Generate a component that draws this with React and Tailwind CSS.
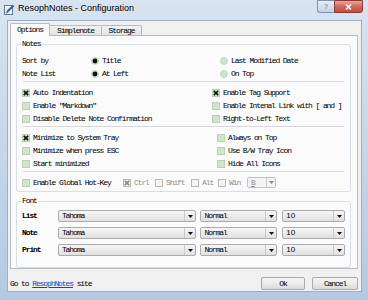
import React from 'react'

const mono = "font-['Liberation_Mono',monospace] text-[8px] tracking-[-1.1px] text-black leading-none whitespace-nowrap"

function Check({ checked, disabled }) {
    const box = disabled
        ? 'bg-[#f4f4f4] border-[#b8b8b8]'
        : 'bg-[#cfe5cc] border-[#b7d3b4]'
    return (
        <span className={`relative inline-flex w-[8px] h-[8px] shrink-0 border ${box}`}>
            {checked && (
                <svg width="6" height="6" viewBox="0 0 6 6" className="absolute left-0 top-0">
                    <path d="M0.8 0.8L5.2 5.2M5.2 0.8L0.8 5.2" stroke={disabled ? '#8a8a8a' : '#111'} strokeWidth="1.7" />
                </svg>
            )}
        </span>
    )
}

function Radio({ on }) {
    return (
        <svg width="8" height="8" viewBox="0 0 8 8" className="shrink-0">
            <circle cx="4" cy="4" r="3.6" fill="#cde3ca" stroke="#b5d1b2" strokeWidth="0.6" />
            {on && <circle cx="4" cy="4" r="2.4" fill="#111" />}
        </svg>
    )
}

function CheckItem({ label, checked, disabled }) {
    return (
        <div className="flex items-center gap-[3px]">
            <Check checked={checked} disabled={disabled} />
            <span className={`${mono} ${disabled ? '!text-[#8d8d8d]' : ''}`}>{label}</span>
        </div>
    )
}

function RadioItem({ label, on }) {
    return (
        <div className="flex items-center gap-[3px]">
            <Radio on={on} />
            <span className={mono}>{label}</span>
        </div>
    )
}

function Arrow({ color = '#111' }) {
    return (
        <svg width="5" height="3" viewBox="0 0 5 3">
            <path d="M0 0H5L2.5 3Z" fill={color} />
        </svg>
    )
}

function Combo({ text, w, sans }) {
    return (
        <div className={`${w} h-[12px] flex border border-[#acacac] rounded-[2px] bg-gradient-to-b from-[#f6f6f6] to-[#e0e0e0]`}>
            <div className={`flex-1 flex items-center pl-[3px] ${sans ? "font-['Liberation_Sans',sans-serif] text-[8px] leading-none text-black" : mono}`}>{text}</div>
            <div className="w-[11px] flex items-center justify-center border-l border-[#c9c9c9]">
                <Arrow />
            </div>
        </div>
    )
}

function Separator() {
    return <div className="mx-[3px] mt-[1px] mb-[3px] h-[2px] border-t border-[#d5d9dd] border-b border-b-white" />
}

function GroupBox({ label, className, children }) {
    return (
        <div className={`relative ml-[5px] w-[335px] border border-[#d5dfe5] rounded-[3px] box-border ${className}`}>
            <span className={`absolute left-[4px] top-[-5px] px-[1px] bg-[#fbfbfb] ${mono}`}>{label}</span>
            {children}
        </div>
    )
}

function Btn({ children, w }) {
    return (
        <div className={`${w} h-[13px] flex items-center justify-center border border-[#ababab] rounded-[2px] bg-gradient-to-b from-[#f4f4f4] via-[#ebebeb] to-[#dadada]`}>
            <span className={mono}>{children}</span>
        </div>
    )
}

export default function App() {
    return (
        <div className="w-[368px] h-[300px] flex flex-col bg-gradient-to-b from-[#d8e4f0] via-[#c4d7ea] to-[#b3cae2] overflow-hidden">
            {/* title bar */}
            <div className="h-[20px] flex items-start shrink-0">
                <svg width="11" height="11" viewBox="0 0 11 11" className="ml-[4px] mt-[4px]">
                    <rect x="0.5" y="1.5" width="8" height="9" fill="#eef3f9" stroke="#5c7fa6" />
                    <path d="M2 9L9.5 1.5" stroke="#2f5f9a" strokeWidth="2" />
                    <path d="M2 9L3 7.2" stroke="#e0b040" strokeWidth="1.2" />
                </svg>
                <span className="ml-[3px] mt-[3px] font-['Liberation_Sans',sans-serif] text-[9px] leading-[11px] text-black whitespace-nowrap">ResophNotes - Configuration</span>
                <div className="ml-auto mr-[5px] flex">
                    <div className="w-[17px] h-[13px] flex items-center justify-center border border-[#7d93ab] border-r-0 rounded-bl-[3px] bg-gradient-to-b from-[#e6eef6] to-[#c3d3e3] text-[7px] leading-none text-[#5a6e84] font-['Liberation_Sans',sans-serif]">?</div>
                    <div className="w-[29px] h-[13px] flex items-center justify-center border border-[#8b3b33] rounded-br-[3px] bg-gradient-to-b from-[#e9a69a] via-[#d2695a] to-[#c44c3a]">
                        <svg width="7" height="6" viewBox="0 0 7 6">
                            <path d="M1 0.5L6 5.5M6 0.5L1 5.5" stroke="#fff" strokeWidth="1.6" />
                        </svg>
                    </div>
                </div>
            </div>

            {/* client */}
            <div className="ml-[7px] w-[355px] h-[272px] shrink-0 flex flex-col border border-[#9db1c6] bg-[#f0f0f0] pt-[2px] pl-[2px] pb-[1px]">
                {/* tabs */}
                <div className="h-[12px] flex items-end relative z-10">
                    <div className="w-[40px] h-[13px] -mb-px flex items-center justify-center bg-[#fbfbfb] border border-b-0 border-[#b6bbc0] rounded-t-[2px]">
                        <span className={mono}>Options</span>
                    </div>
                    <div className="w-[52px] h-[10px] flex items-center justify-center bg-gradient-to-b from-[#f3f3f3] to-[#e3e3e3] border border-b-0 border-l-0 border-[#b6bbc0] rounded-tr-[2px]">
                        <span className={mono}>Simplenote</span>
                    </div>
                    <div className="w-[40px] h-[10px] flex items-center justify-center bg-gradient-to-b from-[#f3f3f3] to-[#e3e3e3] border border-b-0 border-l-0 border-[#b6bbc0] rounded-tr-[2px]">
                        <span className={mono}>Storage</span>
                    </div>
                </div>

                {/* panel */}
                <div className="w-[348px] h-[234px] shrink-0 border border-[#b6bbc0] bg-[#fbfbfb] pt-[8px]">
                    <GroupBox label="Notes" className="h-[148px] pt-[9px] px-[5px]">
                        <div className="grid grid-cols-[69px_129px_1fr] auto-rows-[13px] items-center">
                            <span className={mono}>Sort by</span>
                            <RadioItem label="Title" on />
                            <RadioItem label="Last Modified Date" />
                            <span className={mono}>Note List</span>
                            <RadioItem label="At Left" on />
                            <RadioItem label="On Top" />
                        </div>
                        <div className="-mx-[2px]"><Separator /></div>
                        <div className="grid grid-cols-[190px_1fr] auto-rows-[13px] items-center">
                            <CheckItem label="Auto Indentation" checked />
                            <CheckItem label="Enable Tag Support" checked />
                            <CheckItem label={'Enable "Markdown"'} />
                            <CheckItem label="Enable Intenal Link with [ and ]" />
                            <CheckItem label="Disable Delete Note Confirmation" />
                            <CheckItem label="Right-to-Left Text" />
                        </div>
                        <div className="-mx-[2px]"><Separator /></div>
                        <div className="grid grid-cols-[195px_1fr] auto-rows-[13px] items-center">
                            <CheckItem label="Minimize to System Tray" checked />
                            <CheckItem label="Always on Top" />
                            <CheckItem label="Minimize when press ESC" />
                            <CheckItem label="Use B/W Tray Icon" />
                            <CheckItem label="Start minimized" />
                            <CheckItem label="Hide All Icons" />
                        </div>
                        <div className="-mx-[2px]"><Separator /></div>
                        <div className="h-[13px] flex items-center">
                            <div className="w-[101px]"><CheckItem label="Enable Global Hot-Key" /></div>
                            <div className="w-[32px]"><CheckItem label="Ctrl" checked disabled /></div>
                            <div className="w-[36px]"><CheckItem label="Shift" disabled /></div>
                            <div className="w-[27px]"><CheckItem label="Alt" disabled /></div>
                            <div className="w-[29px]"><CheckItem label="Win" disabled /></div>
                            <div className="w-[29px] h-[11px] flex border border-[#c2c2c2] rounded-[2px] bg-[#f4f4f4]">
                                <div className="flex-1 flex items-center pl-[3px]">
                                    <span className={`${mono} !text-[#8d8d8d] underline`}>B</span>
                                </div>
                                <div className="w-[9px] flex items-center justify-center border-l border-[#d0d0d0]">
                                    <Arrow color="#8d8d8d" />
                                </div>
                            </div>
                        </div>
                    </GroupBox>

                    <GroupBox label="Font" className="mt-[9px] h-[67px] pt-[8px] px-[5px]">
                        <div className="flex flex-col gap-[5px]">
                            {['List', 'Note', 'Print'].map((name) => (
                                <div key={name} className="h-[12px] flex items-center">
                                    <span className={`w-[36px] font-bold ${mono}`}>{name}</span>
                                    <Combo text="Tahoma" w="w-[139px]" />
                                    <div className="w-[4px]" />
                                    <Combo text="Normal" w="w-[77px]" />
                                    <div className="w-[5px]" />
                                    <Combo text="10" w="w-[63px]" sans />
                                </div>
                            ))}
                        </div>
                    </GroupBox>
                </div>

                {/* footer */}
                <div className="flex items-center pt-[8px] pr-[3px]">
                    <span className={mono}>
                        Go to <span className="text-[#1c3fc8] underline">ResophNotes</span> site
                    </span>
                    <div className="ml-auto flex gap-[7px]">
                        <Btn w="w-[44px]">Ok</Btn>
                        <Btn w="w-[46px]">Cancel</Btn>
                    </div>
                </div>
            </div>
        </div>
    )
}
